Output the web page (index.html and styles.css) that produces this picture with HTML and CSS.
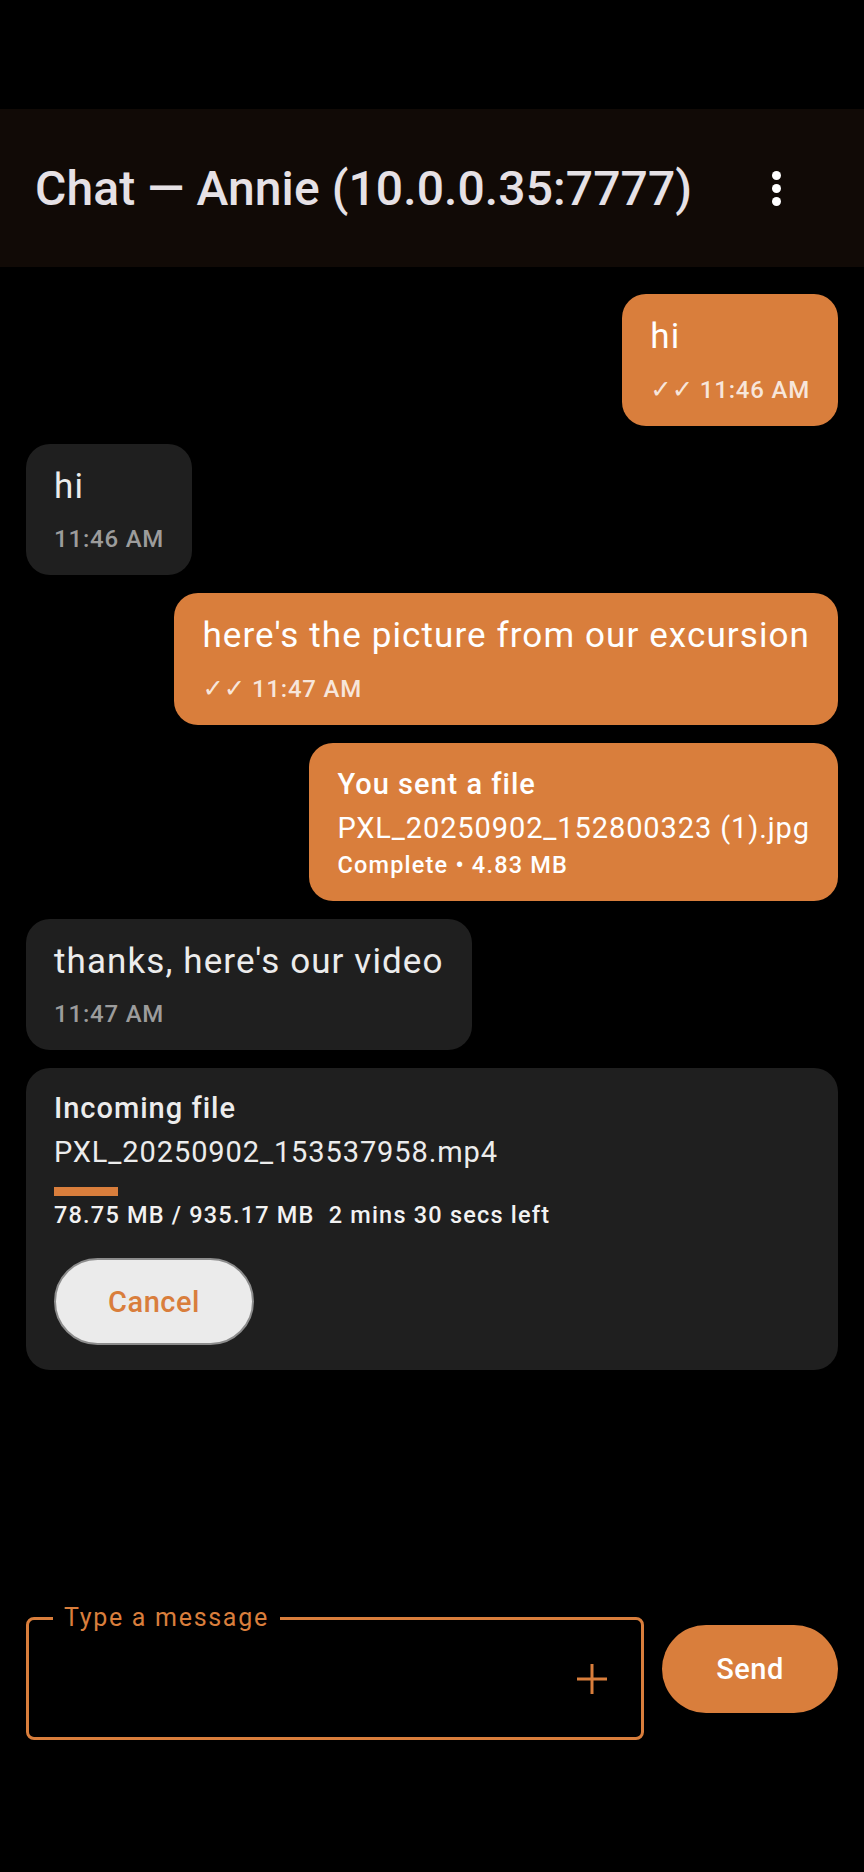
FILE: index.html
```html
<!DOCTYPE html>
<html lang="en">
<head>
<meta charset="utf-8">
<title>Chat — Annie</title>
<link rel="stylesheet" href="styles.css">
</head>
<body>
<div class="screen">
  <div class="status-space"></div>
  <header class="appbar">
    <h1 class="title">Chat — Annie (10.0.0.35:7777)</h1>
    <div class="menu" aria-label="More options">
      <span class="dot"></span><span class="dot"></span><span class="dot"></span>
    </div>
  </header>

  <main class="messages">
    <div class="bubble out">
      <div class="text">hi</div>
      <div class="meta"><span class="ticks">✓✓</span> 11:46 AM</div>
    </div>
    <div class="bubble in">
      <div class="text">hi</div>
      <div class="meta">11:46 AM</div>
    </div>
    <div class="bubble out">
      <div class="text">here's the picture from our excursion</div>
      <div class="meta"><span class="ticks">✓✓</span> 11:47 AM</div>
    </div>
    <div class="bubble out file">
      <div class="file-title">You sent a file</div>
      <div class="file-name">PXL_20250902_152800323 (1).jpg</div>
      <div class="file-info">Complete • 4.83 MB</div>
    </div>
    <div class="bubble in">
      <div class="text">thanks, here's our video</div>
      <div class="meta">11:47 AM</div>
    </div>
    <div class="card">
      <div class="file-title">Incoming file</div>
      <div class="file-name">PXL_20250902_153537958.mp4</div>
      <div class="progress"><div class="progress-fill" style="width: 8.42%"></div></div>
      <div class="file-info">78.75 MB / 935.17 MB&nbsp; 2 mins 30 secs left</div>
      <button class="cancel">Cancel</button>
    </div>
  </main>

  <footer class="composer">
    <div class="field">
      <span class="field-label">Type a message</span>
      <span class="plus" aria-label="Attach">
        <svg width="32" height="32" viewBox="0 0 32 32"><path d="M16 1v30M1 16h30" stroke="#d97e3c" stroke-width="3" fill="none"/></svg>
      </span>
    </div>
    <button class="send">Send</button>
  </footer>
</div>
</body>
</html>
```

FILE: styles.css
```css
* { box-sizing: border-box; }
html, body { margin: 0; padding: 0; background: #000; }
body { font-family: Roboto, "Noto Sans", "DejaVu Sans", sans-serif; }

.screen {
  width: 864px;
  height: 1872px;
  display: flex;
  flex-direction: column;
  background: #000;
  overflow: hidden;
}

.status-space { height: 109px; flex: none; }

.appbar {
  height: 158px;
  flex: none;
  background: #110a06;
  display: flex;
  align-items: center;
  justify-content: space-between;
  padding: 0 76px 0 35px;
}
.title {
  margin: 0;
  font-size: 48px;
  font-weight: 500;
  color: #e6e1e5;
  letter-spacing: 0.1px;
}
.menu {
  width: 24px;
  display: flex;
  flex-direction: column;
  align-items: center;
  gap: 4px;
}
.dot {
  width: 9px;
  height: 9px;
  border-radius: 50%;
  background: #fff;
}

.messages {
  flex: 1;
  display: flex;
  flex-direction: column;
  gap: 18px;
  padding: 27px 26px 0;
}

.bubble {
  border-radius: 24px;
  padding: 21px 28px 20px 28px;
}
.bubble.out { align-self: flex-end; background: #d97e3c; color: #fff; }
.bubble.in { align-self: flex-start; background: #1f1f1f; color: #ececec; }

.text {
  font-size: 35px;
  line-height: 44px;
  letter-spacing: 1.1px;
  white-space: nowrap;
}
.meta {
  margin-top: 14px;
  font-size: 24px;
  line-height: 32px;
  font-weight: 500;
  letter-spacing: 0.8px;
  white-space: nowrap;
}
.bubble.out .meta { color: rgba(255, 255, 255, 0.82); }
.bubble.in .meta { color: #9c9c9c; }
.ticks {
  font-family: "DejaVu Sans", sans-serif;
  font-weight: 400;
  letter-spacing: 0;
  font-size: 25.5px;
}

.bubble.file { padding: 21px 28px 21px 28px; }
.file-title {
  font-size: 29px;
  line-height: 40px;
  font-weight: 500;
  letter-spacing: 1px;
}
.file-name {
  margin-top: 2px;
  font-size: 29px;
  line-height: 44px;
  letter-spacing: 0.9px;
  white-space: nowrap;
}
.file-info {
  font-size: 23.5px;
  line-height: 30px;
  font-weight: 500;
  letter-spacing: 1.2px;
  white-space: nowrap;
}

.card {
  background: #1f1f1f;
  color: #ececec;
  border-radius: 24px;
  padding: 20px 28px 25px 28px;
  display: flex;
  flex-direction: column;
  align-items: flex-start;
}
.progress {
  align-self: stretch;
  height: 9px;
  margin-top: 13px;
  background: transparent;
}
.progress-fill { height: 100%; background: #d97e3c; }
.card .file-info { margin-top: 3.5px; color: #f2f2f2; }
.cancel {
  margin-top: 28.5px;
  width: 200px;
  height: 87px;
  border-radius: 44px;
  background: #ebebeb;
  border: 2px solid #8c8c8c;
  color: #d97e3c;
  font-family: Roboto, sans-serif;
  font-size: 29px;
  font-weight: 500;
  letter-spacing: 0.5px;
  padding: 0;
}

.composer {
  flex: none;
  display: flex;
  align-items: flex-start;
  gap: 18px;
  padding: 0 26px 132px 26px;
}
.field {
  position: relative;
  flex: 1;
  height: 123px;
  border: 3px solid #d97e3c;
  border-radius: 8px;
  display: flex;
  align-items: center;
  justify-content: flex-end;
  padding-right: 33px;
}
.field-label {
  position: absolute;
  left: 24px;
  top: -18px;
  padding: 0 11px 0 11px;
  background: #000;
  color: #d97e3c;
  font-size: 25px;
  line-height: 32px;
  letter-spacing: 1.7px;
}
.plus { display: flex; }
.send {
  margin-top: 8px;
  width: 176px;
  height: 88px;
  border-radius: 44px;
  border: none;
  background: #d97e3c;
  color: #fff;
  font-family: Roboto, sans-serif;
  font-size: 29px;
  font-weight: 500;
  letter-spacing: 0.5px;
  padding: 0;
}
```
